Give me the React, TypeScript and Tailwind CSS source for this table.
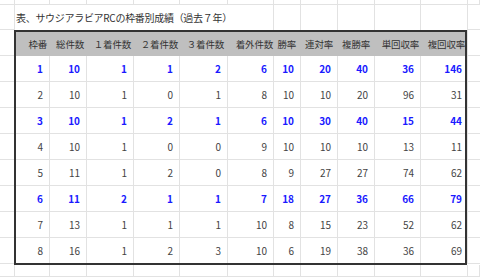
import React from "react";

const font = { fontFamily: '"Noto Sans CJK JP", "Noto Sans", sans-serif' };

// sheet column widths (outside the table)
const sheetCols = [
  "w-[15px]", "w-[35px]", "w-[37px]", "w-[47px]", "w-[46px]", "w-[48px]",
  "w-[46px]", "w-[27px]", "w-[37px]", "w-[37px]", "w-[46px]", "w-[47px]", "w-[12px]",
];

// column widths inside the bordered table
const tableCols = [
  "w-[34px]", "w-[37px]", "w-[47px]", "w-[46px]", "w-[48px]", "w-[46px]",
  "w-[27px]", "w-[37px]", "w-[37px]", "w-[46px]", "w-[44px]",
];

const headers: [string, string][] = [
  ["枠番", "pr-[3px]"],
  ["総件数", "pr-[3px]"],
  ["１着件数", "pr-[3px]"],
  ["２着件数", "pr-[2px]"],
  ["３着件数", "pr-[4px]"],
  ["着外件数", "pr-[1px]"],
  ["勝率", "pr-[5px]"],
  ["連対率", "pr-[5px]"],
  ["複勝率", "pr-[5px]"],
  ["単回収率", "pr-[2px]"],
  ["複回収率", "pr-0"],
];

const rows: { v: number[]; hot?: boolean }[] = [
  { v: [1, 10, 1, 1, 2, 6, 10, 20, 40, 36, 146], hot: true },
  { v: [2, 10, 1, 0, 1, 8, 10, 10, 20, 96, 31] },
  { v: [3, 10, 1, 2, 1, 6, 10, 30, 40, 15, 44], hot: true },
  { v: [4, 10, 1, 0, 0, 9, 10, 10, 10, 13, 11] },
  { v: [5, 11, 1, 2, 0, 8, 9, 27, 27, 74, 62] },
  { v: [6, 11, 2, 1, 1, 7, 18, 27, 36, 66, 79], hot: true },
  { v: [7, 13, 1, 1, 1, 10, 8, 15, 23, 52, 62] },
  { v: [8, 16, 1, 2, 3, 10, 6, 19, 38, 36, 69] },
];

function SheetRow({ h }: { h: string }) {
  return (
    <div className={`flex ${h}`}>
      {sheetCols.map((w, i) => (
        <div key={i} className={`${w} shrink-0 border-r border-b border-[#e2e2e2]`} />
      ))}
    </div>
  );
}

function SideCells({ w }: { w: string }) {
  return (
    <div className={`flex flex-col ${w} shrink-0`}>
      {Array.from({ length: 9 }).map((_, i) => (
        <div key={i} className="h-[26px] shrink-0 border-b border-[#e2e2e2]" />
      ))}
    </div>
  );
}

export default function App() {
  return (
    <div className="w-[480px] h-[277px] overflow-hidden bg-white" style={font}>
      <SheetRow h="h-[5px]" />

      {/* title row */}
      <div className="flex h-[25px]">
        <div className="w-[15px] shrink-0 border-r border-b border-[#e2e2e2]" />
        <div className="w-[259px] shrink-0 border-r border-[#e2e2e2] flex items-center pl-px text-[10px] text-[#333] whitespace-nowrap tracking-[-0.3px]">
          表、サウジアラビアRCの枠番別成績（過去７年）
        </div>
        <div className="w-[27px] shrink-0 border-r border-[#e2e2e2]" />
        <div className="w-[37px] shrink-0 border-r border-[#e2e2e2]" />
        <div className="w-[37px] shrink-0 border-r border-[#e2e2e2]" />
        <div className="w-[46px] shrink-0 border-r border-[#e2e2e2]" />
        <div className="w-[47px] shrink-0 border-r border-[#e2e2e2]" />
        <div className="w-[12px] shrink-0 border-b border-[#e2e2e2]" />
      </div>

      {/* table band */}
      <div className="flex h-[235px]">
        <SideCells w="w-[14px]" />
        <div className="w-[453px] h-[235px] shrink-0 border-2 border-[#333]">
          <div className="flex h-[24px] bg-[#bfbfbf] text-[#333] text-[9.5px]">
            {headers.map(([label, pad], i) => (
              <div
                key={i}
                className={`${tableCols[i]} shrink-0 flex items-center justify-end whitespace-nowrap tracking-[-0.2px] ${pad}`}
              >
                {label}
              </div>
            ))}
          </div>
          {rows.map((r, ri) => (
            <div
              key={ri}
              className={`flex ${ri === rows.length - 1 ? "h-[25px]" : "h-[26px] border-b border-[#e2e2e2]"} text-[10px] ${
                r.hot ? "text-[#1a1aff] font-bold" : "text-[#444]"
              }`}
            >
              {r.v.map((n, ci) => (
                <div
                  key={ci}
                  className={`${tableCols[ci]} shrink-0 flex items-center justify-end ${
                    ci === r.v.length - 1 ? "pr-[3px]" : "pr-[6px] border-r border-[#e2e2e2]"
                  }`}
                >
                  {n}
                </div>
              ))}
            </div>
          ))}
        </div>
        <div className="w-px shrink-0 flex flex-col">
          {Array.from({ length: 9 }).map((_, i) => (
            <div key={i} className="h-[26px] shrink-0 bg-[#e2e2e2]" />
          ))}
        </div>
        <SideCells w="w-[12px]" />
      </div>

      <SheetRow h="h-[12px]" />
    </div>
  );
}
